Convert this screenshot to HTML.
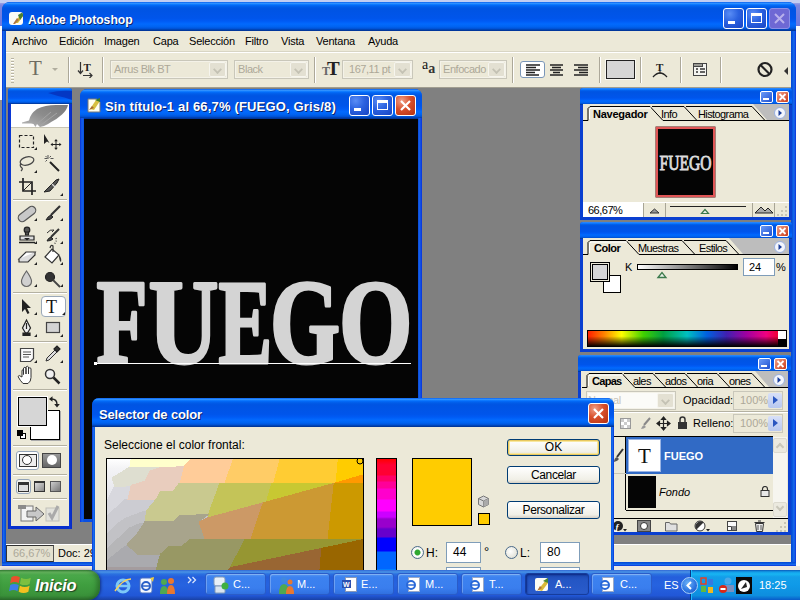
<!DOCTYPE html>
<html><head><meta charset="utf-8">
<style>
*{box-sizing:border-box;margin:0;padding:0}
html,body{width:800px;height:600px;overflow:hidden}
body{position:relative;background:#fbfbfb;font-family:"Liberation Sans",sans-serif;font-size:11px;color:#000}
.a{position:absolute}
.tb{background:linear-gradient(to bottom,#0058ee 0%,#3593ff 4%,#288eff 6%,#127dff 8%,#036ffc 10%,#0262ee 14%,#0057e5 20%,#0054e3 24%,#0055eb 56%,#005bf5 66%,#026afe 76%,#0062ef 86%,#0052d6 92%,#0040ab 96%,#003092 100%)}
.tt{color:#fff;font-weight:bold;font-size:13px;white-space:nowrap;text-shadow:1px 1px 0 #0a246a}
.bg{background:#ece9d8}
.m{letter-spacing:-.2px;position:absolute;top:35px;font-size:11px;white-space:nowrap;line-height:13px}
.sep{position:absolute;top:57px;width:2px;height:26px;border-left:1px solid #aca899;border-right:1px solid #fff}
.dd{letter-spacing:-.45px;position:absolute;top:60px;height:19px;border:1px solid #c9c7ba;background:#ece9d8;color:#aca899;font-size:11px;line-height:16px;padding-left:3px;white-space:nowrap;box-shadow:inset 0 0 0 1px #f4f2e8}
.dd i{position:absolute;right:1px;top:1px;width:17px;height:15px;background:#e3e0d2;border:1px solid #f6f5ee;border-radius:2px}
.dd i:after{content:"";position:absolute;left:4px;top:3px;width:5px;height:5px;border-right:2px solid #c4c2b4;border-bottom:2px solid #c4c2b4;transform:rotate(45deg) scale(.9)}
.wb{position:absolute;width:21px;height:21px;border:1px solid #fff;border-radius:3px;background:radial-gradient(circle at 30% 25%,#5a8df5 0%,#2b62e0 45%,#1744c4 100%)}
.wbx{background:radial-gradient(circle at 30% 25%,#f0a088 0%,#d8502c 45%,#b5300f 100%)}
.pb{position:absolute;width:13px;height:12px;border:1px solid #fff;border-radius:2px;background:linear-gradient(135deg,#6c9cf8,#1e50d0)}
.pbx{background:linear-gradient(135deg,#f0a088,#c83a18)}
.tk{position:absolute;top:573px;width:61px;height:22px;border-radius:3px;background:linear-gradient(#5a9af0 0,#3c82f0 3px,#3a7eee 70%,#3070e0 100%);border:1px solid #2a5cc8;box-shadow:inset 1px 1px 0 rgba(255,255,255,.25)}
.tl{position:absolute;top:578px;color:#fff;font-size:11px;line-height:13px;white-space:nowrap}
.ptab{position:absolute;font-size:11px;white-space:nowrap;line-height:13px;letter-spacing:-.6px}
</style></head><body>

<!-- things behind the main window -->
<div class="a" style="left:0;top:0;width:800px;height:26px;background:linear-gradient(#c4c8ee,#7c86e0 20%,#6a78e0)"></div>
<div class="a" style="left:0;top:0;width:800px;height:3px;background:#c2cdf2"></div>
<div class="a" style="left:0;top:566px;width:800px;height:4px;background:#eee8e0"></div>
<div class="a" style="left:0;top:100px;width:2px;height:466px;background:#8e8e92"></div>

<!-- MAIN WINDOW -->
<div id="main" class="a" style="left:2px;top:2px;width:794px;height:564px;border-radius:8px 8px 0 0;background:#0a4fe0;overflow:hidden">
  <div class="a tb" style="left:0;top:0;width:794px;height:29px"></div>
  <!-- side borders -->
  <div class="a" style="left:0;top:29px;width:4px;height:535px;background:linear-gradient(to right,#0831d9,#166aee 40%,#0855dd 70%,#0046d5)"></div>
  <div class="a" style="right:0;top:29px;width:5px;height:535px;background:linear-gradient(to left,#0831d9,#166aee 40%,#0855dd 70%,#0046d5)"></div>
  <div class="a" style="left:0;bottom:0;width:794px;height:4px;background:linear-gradient(#0046d5,#0855dd 30%,#166aee 60%,#0831d9)"></div>
</div>
<!-- app icon + title -->
<div class="a" style="left:9px;top:12px;width:14px;height:13px;background:#fdfcf6;border-radius:3px;overflow:hidden">
  <svg width="14" height="13" viewBox="0 0 14 13"><path d="M5 11 L13 1 L14 4 L9 11 Z" fill="#d8c038"/><path d="M9 3 L14 0 L14 4 L11 8Z" fill="#4a8030"/><path d="M4 12 L8 6 L10 8 L6 12Z" fill="#b07840"/></svg>
</div>
<div id="t_main" class="a tt" style="left:28px;top:12px;line-height:16px;transform:scaleX(.935);transform-origin:0 0">Adobe Photoshop</div>
<div class="wb" style="left:723px;top:8px"><div class="a" style="left:4px;top:12px;width:7px;height:3px;background:#fff"></div></div>
<div class="wb" style="left:746px;top:8px"><div class="a" style="left:4px;top:4px;width:11px;height:10px;border:1px solid #fff;border-top-width:3px"></div></div>
<div class="wb" style="left:769px;top:8px;background:#6e68d4;border-color:#8a8ee8"><svg class="a" style="left:0;top:0" width="19" height="19"><path d="M5 5 L14 14 M14 5 L5 14" stroke="#b8b0ec" stroke-width="2"/></svg></div>

<!-- MENU BAR -->
<div class="a bg" style="left:6px;top:31px;width:785px;height:21px;border-bottom:1px solid #d8d5c4"></div>
<div class="m" style="left:12px">Archivo</div>
<div class="m" style="left:59px">Edición</div>
<div class="m" style="left:104px">Imagen</div>
<div class="m" style="left:153px">Capa</div>
<div class="m" style="left:189px">Selección</div>
<div class="m" style="left:245px">Filtro</div>
<div class="m" style="left:281px">Vista</div>
<div class="m" style="left:316px">Ventana</div>
<div class="m" style="left:368px">Ayuda</div>

<!-- OPTIONS BAR -->
<div class="a bg" style="left:6px;top:52px;width:785px;height:36px;border-top:1px solid #fff;border-bottom:1px solid #a09d90"></div>
<div class="a" style="left:11px;top:58px;width:3px;height:25px;background:repeating-linear-gradient(#b8b4a4 0 1px,#fff 1px 2px,#ece9d8 2px 3px)"></div>
<div class="a" style="left:29px;top:55px;font-family:'Liberation Serif',serif;font-size:21px;line-height:26px;color:#6e6c62">T</div>
<div class="a" style="left:52px;top:68px;width:0;height:0;border:3px solid transparent;border-top:3px solid #b0ad9e"></div>
<div class="sep" style="left:68px"></div>
<svg class="a" style="left:77px;top:61px" width="17" height="17" viewBox="0 0 17 17"><path d="M3.5 1v11M1 9.5l2.500 3 2.500-3" stroke="#333" fill="none" stroke-width="1.200"/><text x="6.500" y="10" font-family="Liberation Serif" font-weight="bold" font-size="11" fill="#222">T</text><path d="M6 14.500h9M12.500 12l2.500 2.500-2.500 2.500" stroke="#333" fill="none" stroke-width="1.200"/></svg>
<div class="sep" style="left:102px"></div>
<div class="dd" style="left:110px;width:118px">Arrus Blk BT<i></i></div>
<div class="dd" style="left:234px;width:75px">Black<i></i></div>
<div class="sep" style="left:314px"></div>
<div class="a" style="left:322px;top:58px;font-family:'Liberation Serif',serif;font-weight:bold;color:#222;line-height:22px;white-space:nowrap"><span style="font-size:12px;color:#666">T</span><span style="font-size:19px;margin-left:-3px">T</span></div>
<div class="dd" style="left:342px;width:71px;padding-left:6px">167,11 pt<i></i></div>
<div class="a" style="left:422px;top:56px;font-family:'Liberation Serif',serif;color:#111;line-height:22px;white-space:nowrap"><span style="font-size:14px;position:relative;top:-2px">a</span><span style="font-size:14px;font-weight:bold;color:#333;position:relative;top:2px">a</span></div>
<div class="dd" style="left:439px;width:68px">Enfocado<i></i></div>
<div class="sep" style="left:512px"></div>
<!-- align buttons -->
<div class="a" style="left:520px;top:61px;width:25px;height:17px;border:1px solid #7a96b8;border-radius:3px;background:#fff"></div>
<svg class="a" style="left:520px;top:61px" width="70" height="17" viewBox="0 0 70 17"><g stroke="#222" stroke-width="1.300"><path d="M6 4h14M6 6.500h10M6 9h14M6 11.500h9M6 14h13"/><path d="M30 4h13M32 6.500h9M30 9h13M33 11.500h7M30 14h13"/><path d="M54 4h14M58 6.500h10M54 9h14M59 11.500h9M54 14h14"/></g></svg>
<div class="sep" style="left:599px"></div>
<div class="a" style="left:606px;top:60px;width:29px;height:19px;background:#d6d6d6;border:1px solid #222;box-shadow:0 0 0 1px #f8f7f0"></div>
<div class="sep" style="left:640px"></div>
<svg class="a" style="left:651px;top:61px" width="18" height="18" viewBox="0 0 18 18"><text x="5" y="10" font-family="Liberation Serif" font-weight="bold" font-size="11" fill="#222">T</text><path d="M2 16 Q9 8 16 16" stroke="#222" fill="none" stroke-width="1.300"/><path d="M9 10v3" stroke="#222"/></svg>
<div class="sep" style="left:680px"></div>
<svg class="a" style="left:692px;top:62px" width="16" height="15" viewBox="0 0 16 15"><rect x="1.500" y="1.500" width="13" height="12" fill="#f4f4f0" stroke="#444"/><rect x="1.500" y="1.500" width="9" height="3" fill="#9a9a94" stroke="#444"/><path d="M4 7h2M4 10h2M8 7h5M8 10h5" stroke="#333" stroke-width="1.500"/></svg>
<div class="sep" style="left:720px"></div>
<svg class="a" style="left:756px;top:61px" width="18" height="18" viewBox="0 0 18 18"><circle cx="9" cy="8.500" r="6.500" fill="none" stroke="#222" stroke-width="2.200"/><path d="M4.500 4l9 9" stroke="#222" stroke-width="2.200"/></svg>
<div class="a" style="left:784px;top:67px;width:0;height:0;border:4px solid transparent;border-right:4px solid #333;border-left:0"></div>

<!-- WORKSPACE -->
<div class="a" style="left:6px;top:88px;width:785px;height:456px;background:#808080"></div>

<!-- STATUS BAR -->
<div class="a bg" style="left:6px;top:544px;width:785px;height:18px;border-top:1px solid #fff"></div>
<div class="a" style="left:6px;top:545px;width:48px;height:17px;border:1px solid #333;border-right-color:#555;background:#e4e1d0;color:#aca899;font-size:11px;line-height:15px;padding-left:6px">66,67%</div>
<div class="a" style="left:58px;top:546px;font-size:11px;line-height:15px;white-space:nowrap">Doc: 29</div>

<!-- TOOLBOX -->
<div class="a" style="left:8px;top:88px;width:64px;height:441px;background:#0830cc;border-radius:3px 3px 0 0"></div>
<div class="a tb" style="left:8px;top:88px;width:64px;height:16px;border-radius:3px 3px 0 0"></div>
<div class="a" style="left:8px;top:104px;width:3px;height:425px;background:linear-gradient(to right,#0628c4,#0a3ad8)"></div>
<div class="a" style="left:69px;top:104px;width:3px;height:425px;background:linear-gradient(to left,#0628c4,#0a3ad8)"></div>
<svg class="a" style="left:8px;top:88px" width="64" height="16"><path d="M40 5 Q52 2 64 3 L64 12 Q56 9 50 8Z" fill="#0628b0" opacity=".65"/></svg>
<div class="a bg" style="left:11px;top:104px;width:58px;height:422px"></div>
<div class="a" style="left:11px;top:104px;width:58px;height:24px;background:#fff;border-bottom:1px solid #c8c5b4"></div>
<svg class="a" style="left:11px;top:104px" width="58" height="24" viewBox="0 0 58 24">
  <defs><linearGradient id="fg" x1="0" y1="1" x2="1" y2="0"><stop offset="0" stop-color="#b8b8b8"/><stop offset=".5" stop-color="#8c8c8c"/><stop offset="1" stop-color="#7a7a7a"/></linearGradient></defs>
  <path d="M11 18.500 L18 16.500 Q19 10 26 5 Q34 1 45 1 L57 1 Q56 6 51 10.500 Q46 15 41 17.500 Q36 21 33 22 L29 23 L26 20 L24.500 23 L22.500 20 L20 19.500 L11 19.500Z" fill="url(#fg)"/><path d="M26 20 L40 8 M30 21 L46 9" stroke="#a4a4a4" stroke-width="1" fill="none"/>
</svg>
<!-- tool separators -->
<div class="a" style="left:13px;top:199px;width:54px;height:2px;border-top:1px solid #b4b1a2;border-bottom:1px solid #fff"></div>
<div class="a" style="left:13px;top:292px;width:54px;height:2px;border-top:1px solid #b4b1a2;border-bottom:1px solid #fff"></div>
<div class="a" style="left:13px;top:341px;width:54px;height:2px;border-top:1px solid #b4b1a2;border-bottom:1px solid #fff"></div>
<div class="a" style="left:13px;top:389px;width:54px;height:2px;border-top:1px solid #b4b1a2;border-bottom:1px solid #fff"></div>
<div class="a" style="left:13px;top:445px;width:54px;height:2px;border-top:1px solid #b4b1a2;border-bottom:1px solid #fff"></div>
<div class="a" style="left:13px;top:474px;width:54px;height:2px;border-top:1px solid #b4b1a2;border-bottom:1px solid #fff"></div>
<div class="a" style="left:13px;top:498px;width:54px;height:2px;border-top:1px solid #b4b1a2;border-bottom:1px solid #fff"></div>
<!-- selected T tool -->
<div class="a" style="left:41px;top:296px;width:25px;height:21px;background:#fff;border:1px solid #9aa8b8;border-radius:4px"></div>
<!-- tool icons -->
<svg class="a" style="left:11px;top:128px" width="58" height="262" viewBox="11 128 58 262">
 <g fill="none" stroke="#222" stroke-width="1.200">
  <!-- marquee -->
  <rect x="19.500" y="135.500" width="14" height="12" stroke-dasharray="3 2"/>
  <!-- move -->
  <path d="M44 134v10l3-2.500 2.500 1.500z" fill="#222" stroke="none"/>
  <path d="M56 140v9M51.500 144.500h9" stroke-width="1"/><path d="M56 139l-1.800 2.200h3.600zM56 150l-1.800-2.200h3.600zM50.500 144.500l2.200-1.800v3.600zM61.500 144.500l-2.200-1.800v3.600z" fill="#222" stroke="none"/>
  <!-- lasso -->
  <ellipse cx="27" cy="161" rx="7" ry="4" transform="rotate(-15 27 161)" stroke="#444"/>
  <path d="M21 163q-2 3 1 5q1 1-1 3" stroke="#444"/>
  <!-- magic wand -->
  <path d="M50 162l9 9" stroke-width="2"/><path d="M48 155v4M44.500 158.500h3M50.500 158.500h3M45.500 156l1.500 1.500M51 156l-1.500 1.500M45.500 161.500l1.500-1.500" stroke="#555" stroke-width="1"/>
  <!-- crop -->
  <path d="M23 178v13h13M19 182h13v13" stroke-width="1.700"/><path d="M23 191l9-9" stroke-width="1"/>
  <!-- slice -->
  <path d="M44 192l12-12 3-1-2 4-7 8z" fill="#555" stroke="#222" stroke-width="1"/><path d="M52 184l3 3" stroke="#ddd"/>
  <!-- healing -->
  <rect x="17" y="210" width="20" height="8" rx="4" transform="rotate(-38 27 214)" fill="#c8c8c8" stroke="#555"/>
  <!-- brush -->
  <path d="M60 206l-9 9" stroke-width="2.200" stroke="#333"/><path d="M51 215q-3 1-5 5q5 0 7-3z" fill="#444" stroke="#222" stroke-width="1"/>
  <!-- stamp -->
  <circle cx="27" cy="230" r="2.800" fill="#555"/><path d="M25.500 232h3v3h-3z" fill="#555"/><path d="M20 236h14v4h-14z" fill="#ddd"/><path d="M19 242.500h16" stroke-width="1.500"/><path d="M24 238l3 2.500 3-2.500z" fill="#222" stroke="none"/>
  <!-- history brush -->
  <path d="M59 229l-8 8" stroke-width="2" stroke="#333"/><path d="M51 237q-3 1-4 4q4 0 6-2z" fill="#444" stroke="#222" stroke-width="1"/><path d="M47 233q3-4 7-3l-2 2" stroke="#333" stroke-width="1"/><path d="M56 238q1 4-2 6" stroke-dasharray="1 1.500" stroke="#333"/>
  <!-- eraser -->
  <path d="M19 259l7-7h9l-7 7z" fill="#fff" stroke="#333"/><path d="M19 259v3h9l7-7v-3" stroke="#333" fill="#ddd"/>
  <!-- bucket -->
  <path d="M45 257l7-8 7 6-7 8z" fill="#fff" stroke="#333"/><path d="M50 248q1-4 3-2v6" stroke="#333"/><path d="M59 255q3 3 2 7q-2-1-2-7z" fill="#333" stroke="none"/>
  <!-- blur -->
  <path d="M26.500 271q-5 7-5 10.500a5 5 0 0 0 10 0q0-3.500-5-10.500z" fill="#d0d0d0" stroke="#666"/>
  <!-- dodge -->
  <circle cx="50" cy="277" r="4.500" fill="#333" stroke="#222"/><path d="M53 280l7 7" stroke="#444" stroke-width="1.800"/>
  <!-- path select arrow -->
  <path d="M22 299v13l3-3 2.500 5 2-1-2.500-5h4z" fill="#222" stroke="none"/>
  <!-- T -->
  <text x="46" y="313" font-family="Liberation Serif" font-size="18" fill="#111" stroke="none">T</text>
  <!-- pen -->
  <path d="M26.500 320l-4 8 3 5h2l3-5z" fill="#eee" stroke="#222"/><path d="M26.500 323v6" stroke="#222"/><path d="M23 333h7v2.500h-7z" fill="#222"/>
  <!-- shape rect -->
  <rect x="46.500" y="322.500" width="13" height="10" fill="#d4d4d4" stroke="#444"/>
  <!-- notes -->
  <path d="M20.500 348.500h13v10l-3 3h-10z" fill="#fafafa" stroke="#444"/><path d="M23 352h8M23 354.500h8M23 357h6" stroke="#555" stroke-width="1"/>
  <!-- eyedropper -->
  <path d="M46 361l1-3 8-8 2 2-8 8z" fill="#ddd" stroke="#333" stroke-width="1"/><path d="M54 349l3-3 3 3-3 3z" fill="#333" stroke="#222"/>
  <!-- hand -->
  <path d="M22 377v-6q0-1.500 1.500-1.500v5v-6.500q1.500-1.500 2.500 0v6v-7q1.500-1.500 2.500 0v7v-5.500q1.500-1.500 2.500 0v9q0 4-3 6h-5q-3-3-5-7q1-2 3 0z" fill="#fff" stroke="#333" stroke-width="1"/>
  <!-- zoom -->
  <circle cx="50" cy="374" r="4.500" fill="#f0f0f0" stroke="#333" stroke-width="1.500"/><path d="M53.500 377.500l6 6" stroke="#222" stroke-width="2.500"/>
 </g>
 <!-- corner triangles -->
 <g fill="#222">
  <path d="M37 147v3h-3zM37 170v3h-3zM63 193v3h-3zM37 218v3h-3zM63 218v3h-3zM37 241v3h-3zM63 241v3h-3zM37 262v3h-3zM63 262v3h-3zM37 284v3h-3zM63 284v3h-3zM37 312v3h-3zM65 312v3h-3zM37 334v3h-3zM63 334v3h-3zM37 360v3h-3zM63 360v3h-3z"/>
 </g>
</svg>
<!-- color swatches -->
<div class="a" style="left:30px;top:410px;width:30px;height:30px;background:#fff;border:1px solid #000;box-shadow:1px 1px 0 #aaa"></div>
<div class="a" style="left:18px;top:397px;width:29px;height:29px;background:#d6d6d6;border:1px solid #000;box-shadow:0 0 0 1px #fff"></div>
<div class="a" style="left:20px;top:433px;width:6px;height:6px;background:#fff;border:1px solid #000"></div>
<div class="a" style="left:17px;top:430px;width:6px;height:6px;background:#000"></div>
<svg class="a" style="left:48px;top:396px" width="12" height="12" viewBox="0 0 12 12"><path d="M3.500 3 Q9 3 9 8.500" stroke="#222" fill="none" stroke-width="1.400"/><path d="M1 3l3.500-2.800v5.600zM9 11.500l-2.800-3.500h5.600z" fill="#222"/></svg>
<!-- quick mask -->
<div class="a" style="left:16px;top:451px;width:23px;height:19px;border:1px solid #93a4b8;border-radius:3px;background:#fff"></div>
<div class="a" style="left:19px;top:454px;width:18px;height:13px;border:1px solid #333;background:#eee"></div>
<div class="a" style="left:22px;top:455px;width:10px;height:10px;border:1px solid #333;border-radius:50%;background:#fff"></div>
<div class="a" style="left:42px;top:453px;width:19px;height:15px;border:1px solid #444;background:linear-gradient(#999,#666)"></div>
<div class="a" style="left:47px;top:455px;width:10px;height:10px;border-radius:50%;background:#fff"></div>
<!-- screen modes -->
<div class="a" style="left:16px;top:479px;width:15px;height:15px;border:1px solid #93a4b8;border-radius:3px;background:#f4f4f0"></div>
<div class="a" style="left:18px;top:482px;width:11px;height:10px;border:1px solid #333;border-top-width:3px;background:#ddd"></div>
<div class="a" style="left:34px;top:481px;width:11px;height:11px;border:1px solid #333;border-top-width:2px;background:linear-gradient(135deg,#ddd,#888)"></div>
<div class="a" style="left:50px;top:481px;width:11px;height:11px;border:1px solid #555;background:linear-gradient(135deg,#ccc,#777)"></div>
<!-- imageready -->
<svg class="a" style="left:17px;top:503px" width="45" height="21" viewBox="0 0 45 21"><rect x="4" y="3" width="12" height="15" fill="#f2f2f2" stroke="#777"/><rect x="1" y="2" width="8" height="4" fill="#8a8a8a"/><path d="M10 8h9v-4l8 7-8 7v-4h-9z" fill="#c8c8c8" stroke="#666"/><rect x="29" y="5" width="13" height="13" fill="#e2e2dc" stroke="#c0c0b8"/><path d="M32 10l3 5 6-12" stroke="#aaa" stroke-width="3" fill="none"/></svg>

<!-- DOC WINDOW -->
<div class="a" style="left:80px;top:89px;width:342px;height:433px;background:#0a4fe0;border-radius:7px 7px 0 0"></div>
<div class="a tb" style="left:80px;top:89px;width:342px;height:30px;border-radius:7px 7px 0 0"></div>
<div class="a" style="left:80px;top:118px;width:4px;height:404px;background:linear-gradient(to right,#0831d9,#1560ea 50%,#0a50e0)"></div>
<div class="a" style="left:418px;top:118px;width:4px;height:404px;background:linear-gradient(to left,#0831d9,#1560ea 60%,#0a4ad8)"></div>
<div class="a" style="left:84px;top:119px;width:334px;height:400px;background:#050505"></div>
<svg class="a" style="left:86px;top:97px" width="16" height="16" viewBox="0 0 16 16"><path d="M2 2h9l3 3v10h-12z" fill="#fffef0" stroke="#777" stroke-width="1"/><path d="M4 12l6-9 4 1-6 9z" fill="#d8c040"/><path d="M9 3l5-2v4z" fill="#3a7a28"/><path d="M3 13l3-4 2 2z" fill="#a86830"/></svg>
<div id="t_doc" class="a tt" style="left:105px;top:99px;line-height:16px;letter-spacing:.17px">Sin título-1 al 66,7% (FUEGO, Gris/8)</div>
<div class="wb" style="left:349px;top:95px"><div class="a" style="left:4px;top:12px;width:7px;height:3px;background:#fff"></div></div>
<div class="wb" style="left:372px;top:95px"><div class="a" style="left:4px;top:4px;width:11px;height:10px;border:1px solid #fff;border-top-width:3px"></div></div>
<div class="wb wbx" style="left:395px;top:95px"><svg class="a" style="left:0;top:0" width="19" height="19"><path d="M5 5 L14 14 M14 5 L5 14" stroke="#fff" stroke-width="2.200"/></svg></div>
<!-- FUEGO text -->
<svg class="a" style="left:84px;top:260px" width="333" height="130" viewBox="84 260 333 130">
 <g font-family="Liberation Serif" font-weight="bold" font-size="120" fill="#d4d4d4" stroke="#d4d4d4" stroke-width="3.200" stroke-linejoin="round">
  <text id="lF" x="96.500" y="363" textLength="51" lengthAdjust="spacingAndGlyphs">F</text>
  <text id="lU" x="148.500" y="363" textLength="70" lengthAdjust="spacingAndGlyphs">U</text>
  <text id="lE" x="218.500" y="363" textLength="53.700" lengthAdjust="spacingAndGlyphs">E</text>
  <text id="lG" x="270" y="363" textLength="70" lengthAdjust="spacingAndGlyphs">G</text>
  <text id="lO" x="339" y="363" textLength="73.500" lengthAdjust="spacingAndGlyphs">O</text>
 </g>
 <rect x="95" y="363" width="316" height="1" fill="#fff"/>
 <rect x="94" y="362" width="3" height="3" fill="#fff"/>
</svg>

<!-- NAVIGATOR PANEL -->
<div class="a" style="left:580px;top:88px;width:212px;height:132px;background:#0a3fd0;border-radius:3px 3px 0 0"></div>
<div class="a tb" style="left:580px;top:88px;width:212px;height:17px;border-radius:3px 3px 0 0"></div>
<div class="a bg" style="left:583px;top:104px;width:206px;height:113px"></div>
<div class="pb" style="left:760px;top:91px"><div class="a" style="left:2px;top:6px;width:6px;height:2px;background:#fff"></div></div>
<div class="pb pbx" style="left:776px;top:91px"><svg class="a" style="left:0;top:0" width="11" height="10"><path d="M2.500 2l6 6M8.500 2l-6 6" stroke="#fff" stroke-width="1.800"/></svg></div>
<svg class="a" style="left:583px;top:104px" width="206" height="17" viewBox="0 0 206 17">
  <rect x="0" y="0" width="206" height="17" fill="#ece9d8"/>
  <path d="M170 0h36v16h-22z" fill="#bdbdbd"/>
  <path d="M0 16.500h5v-12l2-2h60l13 14h126" fill="none" stroke="#000" stroke-width="1"/>
  <path d="M69 2.500h32l13 14M103 2.500h66l13 14" fill="none" stroke="#000" stroke-width="1"/>
  <path d="M5.500 16v-11.500l1.500-1.500h60" fill="none" stroke="#fff" stroke-width="1" transform="translate(1,1)"/>
  <rect x="6" y="15" width="72" height="2" fill="#ece9d8"/>
  <circle cx="197" cy="9" r="5.500" fill="#f4f6fc" stroke="#9ab0e0"/><path d="M195.500 6l3.500 3-3.500 3z" fill="#1c3f9c"/>
</svg>
<div class="ptab" id="tab_nav" style="left:593px;top:108px;font-weight:bold;letter-spacing:-.25px">Navegador</div>
<div class="ptab" style="left:661px;top:108px">Info</div>
<div class="ptab" style="left:698px;top:108px">Histograma</div>
<!-- thumbnail -->
<div class="a" style="left:656px;top:127px;width:59px;height:70px;background:#040404;border:2px solid #e05656;box-shadow:0 0 0 .5px #5a1818"></div>
<div class="a" id="navtxt" style="left:659px;top:150px;width:53px;height:24px;overflow:visible"><svg width="53" height="24" viewBox="0 0 53 24"><text x="0.500" y="19.500" font-family="Liberation Serif" font-size="21" fill="#dcdcdc" stroke="#dcdcdc" stroke-width=".9" textLength="52" lengthAdjust="spacingAndGlyphs">FUEGO</text></svg></div>
<!-- nav bottom bar -->
<div class="a" style="left:583px;top:202px;width:206px;height:1px;background:#fff"></div>
<div class="a" style="left:583px;top:203px;width:60px;height:14px;background:#fff;font-size:11px;line-height:14px;padding-left:5px;letter-spacing:-.5px">66,67%</div>
<div class="a" style="left:643px;top:203px;width:1px;height:14px;background:#a8a596"></div>
<div class="a" style="left:665px;top:203px;width:1px;height:14px;background:#a8a596"></div>
<div class="a" style="left:752px;top:203px;width:1px;height:14px;background:#a8a596"></div>
<div class="a" style="left:774px;top:203px;width:1px;height:14px;background:#a8a596"></div>
<svg class="a" style="left:644px;top:203px" width="145" height="14" viewBox="644 203 145 14">
  <path d="M650 213l4.500-4 4.500 4z" fill="#999" stroke="#333" stroke-width="1"/>
  <path d="M670 206.500h76" stroke="#222" stroke-width="1.200"/>
  <path d="M701.500 213.500l3.500-4 3.500 4z" fill="#e8f0e8" stroke="#3c7a4c" stroke-width="1.200"/>
  <path d="M755 213l6-6 4 4 3-3 5 5z" fill="#aaa" stroke="#222" stroke-width="1"/>
  <g fill="#c8c5b4"><rect x="785" y="206" width="2" height="2"/><rect x="781" y="210" width="2" height="2"/><rect x="785" y="210" width="2" height="2"/><rect x="777" y="214" width="2" height="2"/><rect x="781" y="214" width="2" height="2"/><rect x="785" y="214" width="2" height="2"/></g>
</svg>

<!-- COLOR PANEL -->
<div class="a" style="left:580px;top:222px;width:212px;height:130px;background:#0a3fd0;border-radius:3px 3px 0 0"></div>
<div class="a tb" style="left:580px;top:222px;width:212px;height:17px;border-radius:3px 3px 0 0"></div>
<div class="a bg" style="left:583px;top:238px;width:206px;height:111px"></div>
<div class="pb" style="left:760px;top:225px"><div class="a" style="left:2px;top:6px;width:6px;height:2px;background:#fff"></div></div>
<div class="pb pbx" style="left:776px;top:225px"><svg class="a" style="left:0;top:0" width="11" height="10"><path d="M2.500 2l6 6M8.500 2l-6 6" stroke="#fff" stroke-width="1.800"/></svg></div>
<svg class="a" style="left:583px;top:238px" width="206" height="17" viewBox="0 0 206 17">
  <rect x="0" y="0" width="206" height="17" fill="#ece9d8"/>
  <path d="M146 0h60v16h-46z" fill="#bdbdbd"/>
  <path d="M0 16.500h5v-12l2-2h36l13 14h150" fill="none" stroke="#000" stroke-width="1"/>
  <path d="M45 2.500h54l13 14M101 2.500h42l13 14" fill="none" stroke="#000" stroke-width="1"/>
  <path d="M5.500 16v-11.500l1.500-1.500h36" fill="none" stroke="#fff" stroke-width="1" transform="translate(1,1)"/>
  <rect x="6" y="15" width="48" height="2" fill="#ece9d8"/>
  <circle cx="197" cy="9" r="5.500" fill="#f4f6fc" stroke="#9ab0e0"/><path d="M195.500 6l3.500 3-3.500 3z" fill="#1c3f9c"/>
</svg>
<div class="ptab" id="tab_col" style="left:594px;top:242px;font-weight:bold;letter-spacing:-.5px">Color</div>
<div class="ptab" style="left:638px;top:242px">Muestras</div>
<div class="ptab" style="left:699px;top:242px">Estilos</div>
<div class="a" style="left:603px;top:275px;width:18px;height:18px;background:#fff;border:1px solid #000"></div>
<div class="a" style="left:590px;top:262px;width:20px;height:20px;background:#d6d6d6;border:1px solid #000;box-shadow:inset 0 0 0 1px #ece9d8,inset 0 0 0 2px #000"></div>
<div class="a" style="left:625px;top:261px;font-size:11px;line-height:13px">K</div>
<div class="a" style="left:637px;top:264px;width:101px;height:6px;border:1px solid #000;background:linear-gradient(to right,#fff,#000)"></div>
<svg class="a" style="left:656px;top:270px" width="12" height="9" viewBox="0 0 12 9"><path d="M2 7.500l4-5 4 5z" fill="#e8f0e8" stroke="#3c7a4c" stroke-width="1.300"/></svg>
<div class="a" style="left:743px;top:258px;width:32px;height:18px;background:#fff;border:1px solid #7f9db9;font-size:11px;line-height:16px;padding-left:5px">24</div>
<div class="a" style="left:776px;top:261px;font-size:11px;line-height:13px">%</div>
<div class="a" style="left:587px;top:330px;width:200px;height:17px;border:1px solid #000;background:linear-gradient(to bottom,rgba(255,255,255,.0) 0%,rgba(0,0,0,0) 35%,rgba(0,0,0,.95) 100%),linear-gradient(to right,#ff2000 0%,#ff8000 8%,#ffff00 17%,#40d000 28%,#00a040 38%,#00c0c0 50%,#0060e0 60%,#4020b0 70%,#a000a0 80%,#f00080 90%,#f00040 95%,#f00030 100%)"></div>
<div class="a" style="left:778px;top:331px;width:8px;height:8px;background:#fff"></div>
<div class="a" style="left:778px;top:339px;width:8px;height:7px;background:#000"></div>

<!-- LAYERS PANEL -->
<div class="a" style="left:578px;top:355px;width:213px;height:180px;background:#0a3fd0;border-radius:3px 3px 0 0"></div>
<div class="a tb" style="left:578px;top:355px;width:213px;height:17px;border-radius:3px 3px 0 0"></div>
<div class="a bg" style="left:581px;top:371px;width:207px;height:161px"></div>
<div class="pb" style="left:758px;top:358px"><div class="a" style="left:2px;top:6px;width:6px;height:2px;background:#fff"></div></div>
<div class="pb pbx" style="left:774px;top:358px"><svg class="a" style="left:0;top:0" width="11" height="10"><path d="M2.500 2l6 6M8.500 2l-6 6" stroke="#fff" stroke-width="1.800"/></svg></div>
<svg class="a" style="left:582px;top:371px" width="206" height="17" viewBox="0 0 206 17">
  <rect x="0" y="0" width="206" height="17" fill="#ece9d8"/>
  <path d="M173 0h33v16h-19z" fill="#bdbdbd"/>
  <path d="M0 16.500h5v-12l2-2h33l13 14h153" fill="none" stroke="#000" stroke-width="1"/>
  <path d="M42 2.500h29l13 14M73 2.500h30l13 14M105 2.500h30l13 14M137 2.500h33l13 14" fill="none" stroke="#000" stroke-width="1"/>
  <path d="M5.500 16v-11.500l1.500-1.500h33" fill="none" stroke="#fff" stroke-width="1" transform="translate(1,1)"/>
  <rect x="6" y="15" width="45" height="2" fill="#ece9d8"/>
  <circle cx="197" cy="9" r="5.500" fill="#f4f6fc" stroke="#9ab0e0"/><path d="M195.500 6l3.500 3-3.500 3z" fill="#1c3f9c"/>
</svg>
<div class="ptab" id="tab_lay" style="left:592px;top:375px;font-weight:bold;letter-spacing:-.7px">Capas</div>
<div class="ptab" style="left:633px;top:375px">ales</div>
<div class="ptab" style="left:665px;top:375px">ados</div>
<div class="ptab" style="left:697px;top:375px">oria</div>
<div class="ptab" style="left:729px;top:375px">ones</div>
<!-- row 1 -->
<div class="dd" style="left:586px;top:391px;width:90px;height:19px;color:#c8c5b8;background:#fbfbf8;padding-left:1px">Normal<i></i></div>
<div class="a" style="left:683px;top:394px;font-size:11px;line-height:13px">Opacidad:</div>
<div class="a" style="left:733px;top:391px;width:50px;height:19px;border:1px solid #c9c7ba;background:#ece9d8;color:#aca899;font-size:11px;line-height:17px;padding-left:6px">100%</div>
<div class="a" style="left:768px;top:393px;width:14px;height:15px;background:linear-gradient(#d8e0f8,#b8c8f0);border-radius:2px"></div>
<div class="a" style="left:773px;top:396px;width:0;height:0;border:4px solid transparent;border-left:5px solid #2a56c0;border-right:0"></div>
<div class="a" style="left:582px;top:411px;width:206px;height:2px;border-top:1px solid #b4b1a2;border-bottom:1px solid #fff"></div>
<!-- row 2 -->
<svg class="a" style="left:618px;top:414px" width="72" height="18" viewBox="618 414 72 18">
  <rect x="620.500" y="418.500" width="10" height="10" fill="#fff" stroke="#999"/><path d="M621 419h3v3h-3zM627 419h3v3h-3zM624 422h3v3h-3zM621 425h3v3h-3zM627 425h3v3h-3z" fill="#ccc"/>
  <path d="M650 418l-6 7" stroke="#888" stroke-width="2"/><path d="M644 425q-2 1-3 4q3 0 5-2z" fill="#999"/>
  <path d="M663.500 418v11M658 423.500h11M663.500 417l-2 2.500h4zM663.500 430l-2-2.500h4zM657 423.500l2.500-2v4zM670 423.500l-2.500-2v4z" stroke="#222" stroke-width="1.200" fill="#222"/>
  <rect x="678" y="422" width="9" height="7" fill="#333"/><path d="M680 422v-2.500a2.500 2.500 0 0 1 5 0v2.500" fill="none" stroke="#333" stroke-width="1.500"/>
</svg>
<div class="a" style="left:693px;top:417px;font-size:11px;line-height:13px">Relleno:</div>
<div class="a" style="left:733px;top:414px;width:50px;height:19px;border:1px solid #c9c7ba;background:#ece9d8;color:#aca899;font-size:11px;line-height:17px;padding-left:6px">100%</div>
<div class="a" style="left:768px;top:416px;width:14px;height:15px;background:linear-gradient(#d8e0f8,#b8c8f0);border-radius:2px"></div>
<div class="a" style="left:773px;top:419px;width:0;height:0;border:4px solid transparent;border-left:5px solid #2a56c0;border-right:0"></div>
<!-- layer list -->
<div class="a" style="left:582px;top:436px;width:191px;height:1px;background:#000"></div>
<div class="a" style="left:625px;top:436px;width:1px;height:74px;background:#000"></div>
<div class="a" style="left:610px;top:437px;width:1px;height:73px;background:#c8c5b4"></div>
<div class="a" style="left:582px;top:473px;width:44px;height:1px;background:#c8c5b4"></div>
<svg class="a" style="left:612px;top:447px" width="13" height="16" viewBox="0 0 13 16"><path d="M11 2l-6 8" stroke="#333" stroke-width="2"/><path d="M5 10q-3 1-3 5q4-1 5-3z" fill="#555"/></svg>
<div class="a" style="left:626px;top:437px;width:147px;height:37px;background:#316ac5"></div>
<div class="a" style="left:628px;top:439px;width:33px;height:33px;background:#fff;border:1px solid #9ab4e4;box-shadow:inset 0 0 0 1px #fff;text-align:center;font-family:'Liberation Serif',serif;font-size:21px;line-height:33px;color:#111">T</div>
<div class="a" style="left:664px;top:450px;font-size:11px;font-weight:bold;color:#fff;line-height:13px">FUEGO</div>
<div class="a" style="left:628px;top:476px;width:28px;height:32px;background:#050505"></div>
<div class="a" style="left:659px;top:486px;font-size:11px;font-style:italic;line-height:13px">Fondo</div>
<svg class="a" style="left:760px;top:486px" width="10" height="11" viewBox="0 0 10 11"><rect x="1" y="4.500" width="8" height="6" fill="#e8e8e8" stroke="#333"/><path d="M2.500 4.500v-1.500a2.500 2.500 0 0 1 5 0v1.500" fill="none" stroke="#333" stroke-width="1.200"/></svg>
<div class="a" style="left:626px;top:510px;width:147px;height:1px;background:#000"></div>
<!-- scrollbar -->
<div class="a" style="left:773px;top:437px;width:14px;height:81px;background:#f6f5ef"></div>
<div class="a" style="left:773px;top:438px;width:14px;height:15px;background:#ebe9df;border:1px solid #dcdacf;border-radius:2px"></div>
<div class="a" style="left:777px;top:444px;width:6px;height:6px;border-left:2px solid #c9c7ba;border-top:2px solid #c9c7ba;transform:rotate(45deg)"></div>
<div class="a" style="left:773px;top:502px;width:14px;height:15px;background:#ebe9df;border:1px solid #dcdacf;border-radius:2px"></div>
<div class="a" style="left:777px;top:504px;width:6px;height:6px;border-right:2px solid #c9c7ba;border-bottom:2px solid #c9c7ba;transform:rotate(45deg)"></div>
<div class="a" style="left:582px;top:518px;width:206px;height:1px;background:#000"></div>
<!-- bottom icons -->
<svg class="a" style="left:610px;top:519px" width="178" height="14" viewBox="610 519 178 14">
  <circle cx="618" cy="526" r="5" fill="#222"/><text x="615.500" y="529.500" font-family="Liberation Serif" font-style="italic" font-weight="bold" font-size="9" fill="#fff">f</text><path d="M623 529h4l-2 2.500z" fill="#222"/>
  <rect x="637.500" y="520.500" width="13" height="11" fill="#888" stroke="#444"/><circle cx="644" cy="526" r="3.500" fill="#fff" stroke="#333"/>
  <path d="M665.500 522.500h4l1 1.500h6.500v7h-11.500z" fill="#e0e0e0" stroke="#666"/>
  <circle cx="700" cy="526" r="5" fill="#fff" stroke="#333"/><path d="M696.500 529.500a5 5 0 0 1 7-7z" fill="#333"/><path d="M706 529h4l-2 2.500z" fill="#222"/>
  <rect x="727.500" y="521.500" width="9" height="9" fill="#fafafa" stroke="#444"/><path d="M727.500 526.500h4v4" fill="none" stroke="#444"/><rect x="732" y="526" width="4" height="4" fill="#888"/>
  <path d="M755.500 523.500h8l-1 8h-6z" fill="#eee" stroke="#333"/><path d="M754.500 522.500h10M758 521h3" stroke="#333" stroke-width="1.200"/><path d="M758 525v5M761 525v5" stroke="#555"/>
  <g fill="#c8c5b4"><rect x="784" y="522" width="2" height="2"/><rect x="780" y="526" width="2" height="2"/><rect x="784" y="526" width="2" height="2"/><rect x="776" y="530" width="2" height="2"/><rect x="780" y="530" width="2" height="2"/><rect x="784" y="530" width="2" height="2"/></g>
</svg>

<!-- COLOR PICKER DIALOG -->
<div class="a" style="left:92px;top:398px;width:522px;height:176px;background:#0a4fe0;border-radius:7px 7px 0 0"></div>
<div class="a tb" style="left:92px;top:398px;width:522px;height:29px;border-radius:7px 7px 0 0"></div>
<div class="a" style="left:92px;top:427px;width:3px;height:147px;background:linear-gradient(to right,#0831d9,#166aee 50%,#0855dd)"></div>
<div class="a" style="left:611px;top:427px;width:3px;height:147px;background:linear-gradient(to left,#0831d9,#166aee 50%,#0855dd)"></div>
<div class="a bg" style="left:95px;top:427px;width:516px;height:147px"></div>
<div id="t_dlg" class="a tt" style="left:99px;top:407px;line-height:16px;letter-spacing:-.15px">Selector de color</div>
<div class="wb wbx" style="left:588px;top:403px"><svg class="a" style="left:0;top:0" width="19" height="19"><path d="M5 5 L14 14 M14 5 L5 14" stroke="#fff" stroke-width="2.200"/></svg></div>
<div id="t_sel" class="a" style="left:104px;top:438px;font-size:12px;line-height:14px;white-space:nowrap">Seleccione el color frontal:</div>
<!-- color field -->
<svg class="a" style="left:106px;top:458px" width="258" height="116" viewBox="106 458 258 116" shape-rendering="crispEdges">
<defs><linearGradient id="gb" x1="0" y1="0" x2="0" y2="1" gradientUnits="objectBoundingBox"></linearGradient></defs>
<rect x="106" y="458" width="258" height="116" fill="#000"/>
<!-- gray base bands -->
<defs><linearGradient id="g0" x1="0" y1="0" x2="0" y2="1"><stop offset="0" stop-color="#ffffff"/><stop offset=".2" stop-color="#f4f4f6"/><stop offset="1" stop-color="#e2e2e8"/></linearGradient></defs>
<rect x="107" y="459" width="256" height="115" fill="#c4c4c4"/>
<rect x="107" y="459" width="100" height="45" fill="url(#g0)"/>
<polygon points="107,500 112,490 118,478 128,470 135,459 210,459 210,574 107,574" fill="#d8d8de"/>
<polygon points="107,515 115,508 124,499 210,499 210,574 107,574" fill="#ccccd2"/>
<polygon points="107,533 116,524 125,518 143,511 210,510 210,574 107,574" fill="#c2c2c6"/>
<polygon points="107,548 118,538 128,528 140,523 210,522 210,574 107,574" fill="#b6b6b8"/>
<polygon points="107,560 122,548 127,545 210,545 210,574 107,574" fill="#aaaaae"/>
<polygon points="107,567 210,566 210,574 107,574" fill="#a49c9e"/>
<!-- light gray-beige -->
<polygon points="130,466.700 160,467.700 150,471 145,481 131,485.500 115,487 112,478 125,470" fill="#deded0" stroke="#deded0" stroke-width="1"/>
<!-- top band -->
<polygon points="131.200,459 191.700,459 183.300,466.700 130,466.700" fill="#ffffcc" stroke="#ffffcc" stroke-width="1"/>
<polygon points="191.700,459 233.300,459 225,483.300 179.200,483.300 183.300,466.700" fill="#ffcc99" stroke="#ffcc99" stroke-width="1"/>
<polygon points="233.300,459 280,459 273.750,483.300 225,483.300" fill="#ffcc66" stroke="#ffcc66" stroke-width="1"/>
<polygon points="280,459 338.300,459 336.250,482 330,483.300 273.750,483.300" fill="#ffcc33" stroke="#ffcc33" stroke-width="1"/>
<polygon points="338.300,459 363,459 363,475 336.250,482" fill="#ffcc00" stroke="#ffcc00" stroke-width="1"/>
<polygon points="334.200,483.300 363,475 363,483.300" fill="#ff9900" stroke="#ff9900" stroke-width="1"/>
<!-- pink -->
<polygon points="160.400,467.700 183.300,466.700 179.200,483.300 172.900,491.700 160.400,491.700 156.250,499 128,499 131.250,485.400 144.800,481.250 150,470.800" fill="#e9cdbe" stroke="#e9cdbe" stroke-width="1"/>
<!-- olive light -->
<polygon points="179.200,483.300 219.800,483.300 208.300,514.600 179.200,515.600 172.900,521.900 144.800,521.900 146.900,510.400 156.250,499 160.400,491.700 172.900,491.700" fill="#c9c98f" stroke="#c9c98f" stroke-width="1"/>
<!-- yellow-green -->
<polygon points="219.800,483.300 271.700,483.300 266.500,502 208.300,517.700 208.300,514.600" fill="#c4c458" stroke="#c4c458" stroke-width="1"/>
<polygon points="271.700,483.300 334.200,483.300 266.500,502" fill="#c8c832" stroke="#c8c832" stroke-width="1"/>
<!-- tan / orange -->
<polygon points="208.300,517.700 263.300,502.800 250.800,539.600 204.200,539.600 198,521.900" fill="#cc9966" stroke="#cc9966" stroke-width="1"/>
<polygon points="263.300,502.800 334.200,483.300 336.250,483.300 328,539.600 250.800,539.600" fill="#cc9933" stroke="#cc9933" stroke-width="1"/>
<polygon points="334.200,483.300 363,483.300 363,539.600 328,539.600" fill="#cc9900" stroke="#cc9900" stroke-width="1"/>
<!-- gray-olive -->
<polygon points="179.200,515.600 208.300,514.600 198,521.900 204.200,539.600 189.600,539.600 181.250,546.900 168.750,546.900 160.400,554.200 137.500,554.200 127,544.800 137.500,533.300 144.800,521.900 172.900,521.900" fill="#a8a48c" stroke="#a8a48c" stroke-width="1"/>
<!-- olive -->
<polygon points="189.600,539.600 244.600,539.600 232,564.600 226,574 155,574 160.400,554.200 168.750,546.900 181.250,546.900" fill="#989864" stroke="#989864" stroke-width="1"/>
<polygon points="244.600,539.600 363,539.600 230,567.700 232,564.600" fill="#969632" stroke="#969632" stroke-width="1"/>
<!-- browns -->
<polygon points="226,574 230,567.700 321.700,548.400 319.600,574" fill="#996633" stroke="#996633" stroke-width="1"/>
<polygon points="321.700,548.400 363,539.600 363,574 319.600,574" fill="#996600" stroke="#996600" stroke-width="1"/>
<!-- cursor -->
<circle cx="360" cy="461" r="3" fill="none" stroke="#000" stroke-width="1" shape-rendering="auto"/>
<rect x="363" y="458" width="1" height="116" fill="#000"/>

</svg>
<!-- hue strip -->
<div class="a" style="left:376px;top:458px;width:21px;height:116px;border:1px solid #000;background:linear-gradient(to bottom,#ff0000 0,#ff0033 6px,#ff0033 16px,#ff0066 17px,#ff0066 22px,#ff0099 23px,#ff0099 29px,#ff00cc 30px,#ff00cc 40px,#ff00ff 41px,#ff00ff 52px,#cc00ff 53px,#cc00ff 58px,#9900cc 60px,#9900cc 68px,#6600cc 70px,#6600cc 78px,#0000ff 79px,#0000ff 92px,#0066ff 93px,#0066ff 110px,#0099ff 111px)"></div>
<!-- preview -->
<div class="a" style="left:412px;top:458px;width:60px;height:68px;background:#ffcc00;border:1px solid #000"></div>
<svg class="a" style="left:477px;top:495px" width="13" height="13" viewBox="0 0 13 13"><path d="M6.500 1l5 2.500v6l-5 2.500-5-2.500v-6z" fill="#d8d8d8" stroke="#777"/><path d="M1.500 3.500l5 2.500 5-2.500M6.500 6v6" stroke="#777" fill="none"/><path d="M6.500 6l5-2.500v6l-5 2.500z" fill="#aaa"/></svg>
<div class="a" style="left:478px;top:513px;width:12px;height:12px;background:#ffcc00;border:1px solid #000"></div>
<!-- buttons -->
<div class="a btn" style="left:507px;top:439px;width:93px;height:17px;border:1px solid #003c74;border-radius:3px;background:linear-gradient(#fff,#f0efe6 80%,#d6d0c5);box-shadow:inset 0 0 0 1px #e8c860,inset 0 0 0 2px #f8e8a0;text-align:center;font-size:12px;line-height:15px">OK</div>
<div class="a btn" style="left:507px;top:466px;width:93px;height:18px;border:1px solid #003c74;border-radius:3px;background:linear-gradient(#fff,#f0efe6 80%,#d6d0c5);text-align:center;font-size:12px;line-height:16px;letter-spacing:-.4px">Cancelar</div>
<div class="a btn" style="left:507px;top:501px;width:93px;height:18px;border:1px solid #003c74;border-radius:3px;background:linear-gradient(#fff,#f0efe6 80%,#d6d0c5);text-align:center;font-size:12px;line-height:16px;letter-spacing:-.4px">Personalizar</div>
<!-- H / L row -->
<div class="a" style="left:411px;top:546px;width:13px;height:13px;border-radius:50%;border:1px solid #4a6a8a;background:radial-gradient(circle,#30a830 0 2.500px,#fff 3.500px,#e4e4dc 100%)"></div>
<div class="a" style="left:426px;top:546px;font-size:12px;line-height:14px">H:</div>
<div class="a" style="left:446px;top:542px;width:35px;height:21px;background:#fff;border:1px solid #7f9db9;font-size:12px;line-height:19px;padding-left:6px">44</div>
<div class="a" style="left:484px;top:545px;font-size:13px;line-height:14px">°</div>
<div class="a" style="left:505px;top:546px;width:13px;height:13px;border-radius:50%;border:1px solid #4a6a8a;background:radial-gradient(circle at 40% 40%,#fff 0,#e8e8e0 60%,#d0d0c8 100%)"></div>
<div class="a" style="left:520px;top:546px;font-size:12px;line-height:14px">L:</div>
<div class="a" style="left:540px;top:542px;width:40px;height:21px;background:#fff;border:1px solid #7f9db9;font-size:12px;line-height:19px;padding-left:6px">80</div>
<div class="a" style="left:446px;top:567px;width:35px;height:10px;background:#fff;border:1px solid #7f9db9"></div>
<div class="a" style="left:540px;top:567px;width:40px;height:10px;background:#fff;border:1px solid #7f9db9"></div>

<!-- TASKBAR -->
<div class="a" style="left:0;top:570px;width:800px;height:30px;background:linear-gradient(#3168d5 0,#4993e6 2px,#2b71e0 4px,#245edc 7px,#2663e0 50%,#2157d7 85%,#1941a5 100%)"></div>
<!-- start button -->
<div class="a" style="left:0;top:570px;width:100px;height:30px;border-radius:0 12px 12px 0;background:linear-gradient(#3a8a3a 0,#68b860 2px,#4aa84a 5px,#3f9e3f 50%,#3a923a 85%,#307430 100%);box-shadow:1px 0 3px rgba(0,0,40,.5),inset -3px 0 5px rgba(20,60,20,.45)"></div>
<svg class="a" style="left:9px;top:572px" width="23" height="25" viewBox="0 1 19 18"><path d="M2 4q3-2 7 0l-1 5q-3-2-7 0z" fill="#e8502c"/><path d="M10 4.500q4 2 8 0l-1 5q-4 2-8 0z" fill="#7cc040"/><path d="M1 10.500q3-2 7 0l-1 5q-3-2-7 0z" fill="#3a7ee8"/><path d="M9 11q4 2 8 0l-1 5q-4 2-8 0z" fill="#f4c020"/></svg>
<div class="a" id="t_start" style="left:35px;top:574px;font-size:16.500px;font-weight:bold;font-style:italic;color:#fff;line-height:22px;text-shadow:1px 1px 1px #204020;letter-spacing:-.3px">Inicio</div>
<!-- quick launch -->
<svg class="a" style="left:114px;top:576px" width="90" height="20" viewBox="114 576 90 20">
  <circle cx="123" cy="586" r="6" fill="none" stroke="#7cc8f8" stroke-width="3"/><path d="M118 586h10" stroke="#7cc8f8" stroke-width="2.500"/><path d="M115 591q8-12 16-12" stroke="#f4d060" stroke-width="1.500" fill="none"/>
  <rect x="140" y="578" width="12" height="15" rx="2" fill="#f4f8ff" stroke="#4a70c0"/><circle cx="146" cy="586" r="4" fill="none" stroke="#2a60c8" stroke-width="2"/><path d="M143 586h6" stroke="#2a60c8" stroke-width="1.500"/><path d="M150 578l4-1-1 5z" fill="#f0d040"/>
  <circle cx="164" cy="582" r="3" fill="#50a850"/><path d="M160 594q0-8 4-8t4 8z" fill="#50a850"/><circle cx="171" cy="581" r="3" fill="#e87830"/><path d="M167 594q0-9 4-9t4 9z" fill="#e87830"/>
  <path d="M188 577l3 3-3 3M192.500 577l3 3-3 3" fill="none" stroke="#d8e4fc" stroke-width="1.300"/>
</svg>
<!-- task buttons -->
<div class="tk" style="left:205px"></div><div class="tk" style="left:269px"></div><div class="tk" style="left:333px"></div><div class="tk" style="left:397px"></div><div class="tk" style="left:461px"></div>
<div class="tk" style="left:525px;width:64px;background:linear-gradient(#1c48b0,#2456c4 30%,#2a5ccc);box-shadow:inset 1px 1px 2px #0c2880;border-color:#163c9c"></div>
<div class="tk" style="left:591px"></div>
<div class="tl" style="left:233px">C...</div><div class="tl" style="left:297px">M...</div><div class="tl" style="left:361px">E...</div><div class="tl" style="left:425px">M...</div><div class="tl" style="left:489px">T...</div><div class="tl" style="left:555px">A...</div><div class="tl" style="left:620px">C...</div>
<svg class="a" style="left:205px;top:574px" width="450" height="22" viewBox="205 574 450 22">
  <!-- recycle/computer icon -->
  <rect x="214" y="577" width="11" height="9" rx="2" fill="#e8f0f8" stroke="#8098b8"/><rect x="215" y="586" width="10" height="7" rx="1" fill="#d8e4f0" stroke="#8098b8"/><circle cx="225" cy="586" r="3.500" fill="#40b040"/>
  <!-- msn -->
  <circle cx="284" cy="580" r="3" fill="#4088e0"/><path d="M279 594q0-10 5-10t5 10z" fill="#50a850"/><circle cx="290" cy="582" r="2.500" fill="#e87830"/><path d="M286 594q0-8 4-8t4 8z" fill="#e87830"/>
  <!-- word -->
  <rect x="345.500" y="577.500" width="11" height="14" fill="#fff" stroke="#8898b8"/><rect x="342" y="580" width="9" height="8" fill="#2a50b0"/><text x="343" y="587" font-size="7" font-weight="bold" fill="#fff" font-family="Liberation Sans">W</text>
  <!-- ie docs -->
  <g id="ied"><rect x="408.500" y="577.500" width="11" height="14" fill="#fff" stroke="#98a8c8"/><circle cx="411" cy="585" r="4" fill="#fff" stroke="#2a68d8" stroke-width="2"/><path d="M407.500 585h7" stroke="#2a68d8" stroke-width="1.500"/></g>
  <use href="#ied" x="64"/><use href="#ied" x="194"/>
  <!-- ps icon -->
  <rect x="535" y="578" width="13" height="13" rx="2" fill="#fcfcf4"/><path d="M538 590l8-10 2 3-6 8z" fill="#d8b838"/><path d="M543 581l5-3v5z" fill="#4a8a30"/><path d="M537 591l3-5 2 2z" fill="#b07038"/>
</svg>
<!-- tray -->
<div class="a" style="left:690px;top:570px;width:110px;height:30px;background:linear-gradient(#0c59b9 0,#139ee9 2px,#18b5f2 4px,#139ee9 7px,#0f9ae8 50%,#0e8ede 85%,#095bc9 100%);border-left:1px solid #0a3888;box-shadow:inset 1px 0 0 #18bbff"></div>
<div class="a" style="left:664px;top:579px;font-size:11px;line-height:13px;color:#fff">ES</div>
<div class="a" style="left:681px;top:577px;width:17px;height:17px;border-radius:50%;background:radial-gradient(circle at 40% 35%,#6cb4f8,#2a72e0 60%,#1a4cb8);border:1px solid #a8d0f8"></div>
<svg class="a" style="left:685px;top:581px" width="9" height="9"><path d="M6 1l-3.500 3.500 3.500 3.500" fill="none" stroke="#fff" stroke-width="2"/></svg>
<svg class="a" style="left:699px;top:576px" width="56" height="20" viewBox="699 576 56 20">
  <rect x="701" y="578" width="5" height="6" fill="none" stroke="#e84020" stroke-width="1.500"/><rect x="708" y="579" width="5" height="6" fill="#3878e0"/><rect x="701" y="586" width="5" height="6" fill="#60b840"/><rect x="708" y="587" width="5" height="6" fill="#f0b820"/>
  <circle cx="728" cy="581" r="3.500" fill="#48a8e8"/><rect x="724" y="585" width="10" height="7" fill="#7890c0"/><circle cx="723" cy="589" r="4" fill="#d82818"/><rect x="720.500" y="588" width="5" height="2" fill="#fff"/>
  <rect x="736" y="577" width="16" height="17" fill="#080808"/><circle cx="744" cy="586" r="6" fill="#fff"/><path d="M741 589l5-7 1 5z" fill="#222"/>
</svg>
<div class="a" id="t_clock" style="left:759px;top:579px;font-size:11px;line-height:13px;color:#fff">18:25</div>

</body></html>
